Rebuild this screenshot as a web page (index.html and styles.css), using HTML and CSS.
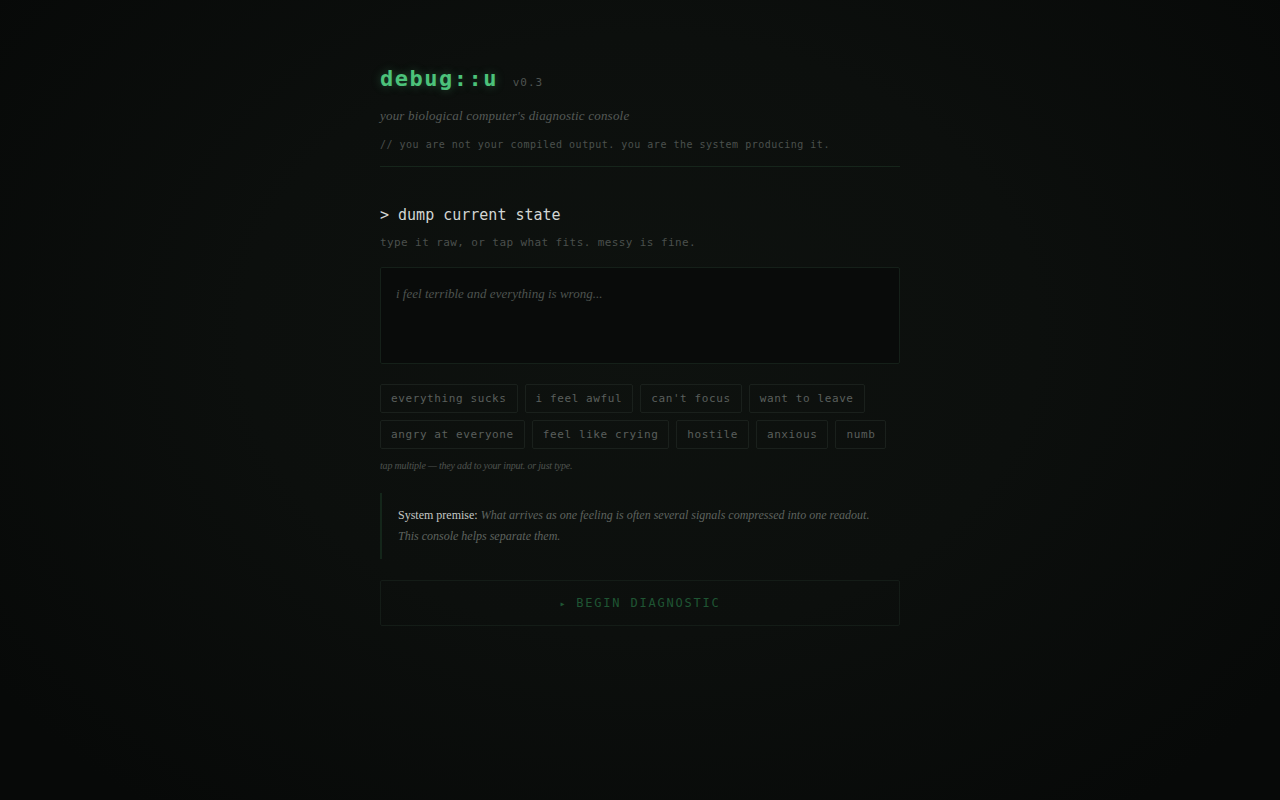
FILE: index.html
```html
<!DOCTYPE html>
<html lang="en">
<head>
<meta charset="utf-8">
<title>debug::u</title>
<link rel="stylesheet" href="styles.css">
</head>
<body>
<main class="console">
  <header class="head">
    <h1 class="title">debug::u <span class="ver">v0.3</span></h1>
    <p class="tagline">your biological computer's diagnostic console</p>
    <p class="comment">// you are not your compiled output. you are the system producing it.</p>
  </header>

  <section class="dump">
    <h2 class="prompt">&gt; dump current state</h2>
    <p class="hint">type it raw, or tap what fits. messy is fine.</p>
    <textarea class="input" placeholder="i feel terrible and everything is wrong..."></textarea>
    <div class="chips">
      <button class="chip">everything sucks</button>
      <button class="chip">i feel awful</button>
      <button class="chip">can't focus</button>
      <button class="chip">want to leave</button>
      <button class="chip">angry at everyone</button>
      <button class="chip">feel like crying</button>
      <button class="chip">hostile</button>
      <button class="chip">anxious</button>
      <button class="chip">numb</button>
    </div>
    <p class="note">tap multiple — they add to your input. or just type.</p>
  </section>

  <blockquote class="premise">
    <strong>System premise:</strong> <em>What arrives as one feeling is often several signals compressed into one readout. This console helps separate them.</em>
  </blockquote>

  <button class="begin"><span class="tri">▸</span> BEGIN DIAGNOSTIC</button>
</main>
</body>
</html>
```

FILE: styles.css
```css
html, body {
  margin: 0;
  padding: 0;
  height: 100%;
}
body {
  background: radial-gradient(ellipse 62% 75% at 50% 42%, #0e120f 0%, #0c0f0d 50%, #070908 100%);
  background-color: #080a09;
  font-family: "DejaVu Sans Mono", "Liberation Mono", monospace;
  color: #c8ccc9;
}
.console {
  width: 520px;
  margin: 0 auto;
  padding-top: 64px;
}
.head {
  border-bottom: 1px solid #16251b;
  padding-bottom: 14px;
}
.title {
  margin: 0;
  font-family: "DejaVu Sans Mono", monospace;
  font-size: 22px;
  font-weight: bold;
  letter-spacing: 1.5px;
  color: #4cc27a;
  line-height: 30px;
  text-shadow: 0 0 10px rgba(76, 194, 122, 0.35);
}
.ver {
  font-size: 11px;
  font-weight: normal;
  letter-spacing: 1px;
  color: #4e5350;
  text-shadow: none;
}
.tagline {
  margin: 9px 0 0;
  font-family: "Liberation Serif", serif;
  font-style: italic;
  font-size: 13px;
  letter-spacing: 0.2px;
  color: #555a57;
  line-height: 18px;
}
.comment {
  margin: 13px 0 0;
  font-size: 10px;
  letter-spacing: 0.5px;
  color: #4b504d;
  line-height: 14px;
}
.dump {
  margin-top: 38px;
}
.prompt {
  margin: 0;
  font-size: 15px;
  font-weight: normal;
  color: #d2d6d3;
  line-height: 20px;
}
.hint {
  margin: 11px 0 0;
  font-size: 11px;
  letter-spacing: 0.4px;
  color: #4a4f4c;
  line-height: 14px;
}
.input {
  display: block;
  box-sizing: border-box;
  width: 100%;
  height: 97px;
  margin-top: 17px;
  padding: 18px 15px;
  background: #090b0a;
  border: 1px solid #152019;
  border-radius: 2px;
  resize: none;
  outline: none;
  font-family: "Liberation Serif", serif;
  font-style: italic;
  font-size: 13px;
  color: #a0a5a2;
}
.input::placeholder {
  color: #4d534f;
}
.chips {
  display: flex;
  flex-wrap: wrap;
  gap: 7px 7px;
  margin-top: 20px;
}
.chip {
  box-sizing: border-box;
  height: 29px;
  padding: 0 10px;
  background: transparent;
  border: 1px solid #1a201c;
  border-radius: 2px;
  font-family: "DejaVu Sans Mono", monospace;
  font-size: 11px;
  letter-spacing: 0.6px;
  color: #5a5f5c;
  cursor: pointer;
}
.note {
  margin: 11px 0 0;
  font-family: "Liberation Serif", serif;
  font-style: italic;
  font-size: 10px;
  letter-spacing: -0.2px;
  color: #4e534f;
  line-height: 12px;
}
.premise {
  margin: 21px 0 0;
  padding: 12px 20px 12px 16px;
  border-left: 2px solid #14261a;
  font-family: "Liberation Serif", serif;
  font-size: 12px;
  line-height: 21px;
  color: #5e635f;
}
.premise strong {
  font-weight: normal;
  color: #c4c8c5;
}
.premise em {
  color: #5e635f;
}
.begin {
  display: block;
  box-sizing: border-box;
  width: 100%;
  height: 46px;
  margin-top: 21px;
  background: transparent;
  border: 1px solid #141c17;
  border-radius: 2px;
  font-family: "DejaVu Sans Mono", monospace;
  font-size: 12px;
  letter-spacing: 1.8px;
  color: #1f5533;
  cursor: pointer;
}
.tri {
  font-size: 10px;
}
```
